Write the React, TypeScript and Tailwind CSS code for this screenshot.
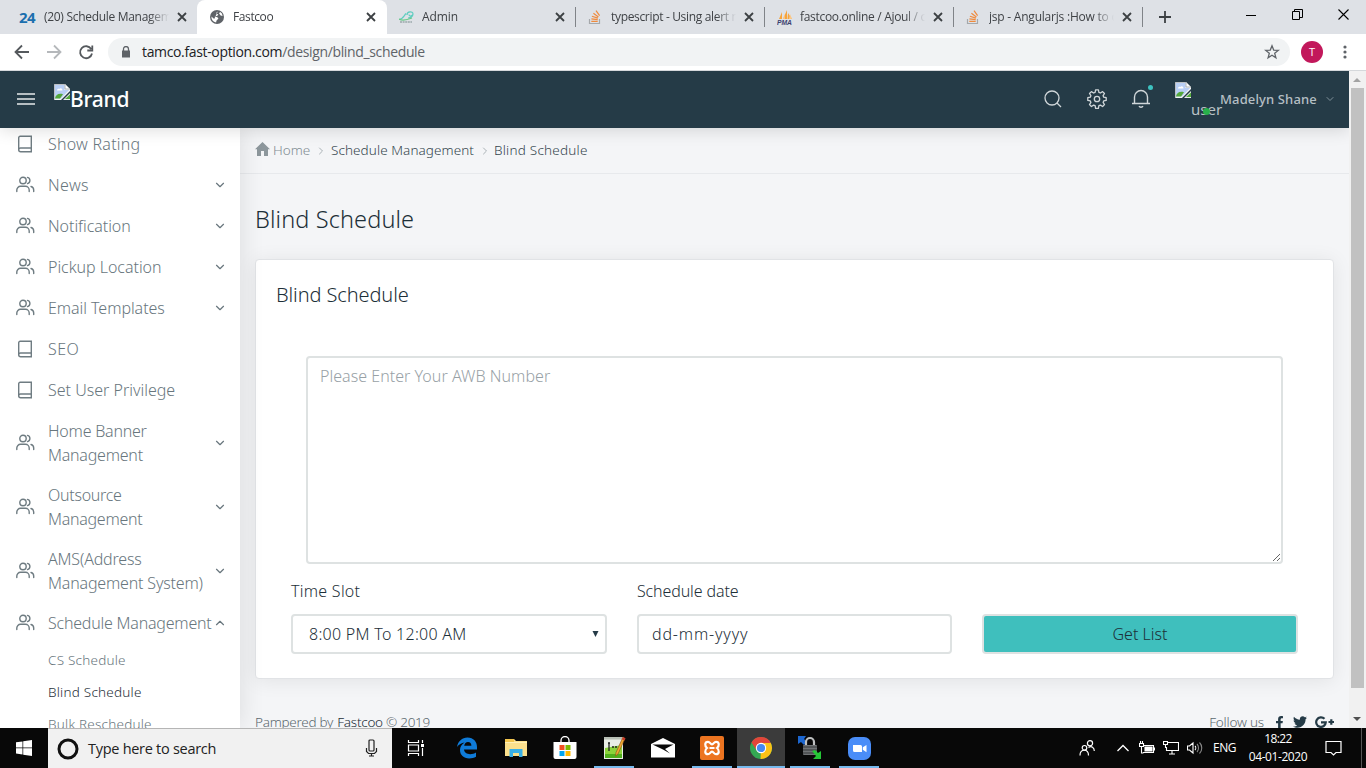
import React from "react";
import { FaFacebookF, FaTwitter } from "react-icons/fa";
import { ChevronDown, ChevronUp, ChevronRight } from "lucide-react";

type TabProps = { icon: React.ReactNode; title: string; track: string; width: string; pad: string; active?: boolean; sep?: boolean };

const CloseX = () => (
  <svg width="10" height="10" viewBox="0 0 10 10" stroke="#3c4043" strokeWidth="1.8" className="shrink-0">
    <path d="M1 1l8 8M9 1l-8 8" />
  </svg>
);

const Tab = ({ icon, title, track, width, pad, active, sep }: TabProps) => (
  <div className={`relative flex h-[34px] shrink-0 items-center ${width} ${pad} ${active ? "rounded-t-lg bg-white" : ""}`}>
    <span className="flex w-[23px] shrink-0 items-center">{icon}</span>
    <span className={`mr-[8px] w-[125px] overflow-hidden whitespace-nowrap text-[12px] leading-[18px] text-[#3f4246] [mask-image:linear-gradient(to_right,black_84%,transparent)] ${track}`}>
      {title}
    </span>
    <CloseX />
    {sep && <span className="absolute right-0 top-[7px] h-5 w-px bg-[#808388]" />}
  </div>
);

const StackIcon = () => (
  <svg width="14" height="16" viewBox="0 0 14 16" fill="none">
    <path d="M1.5 10v4.5h10V10" stroke="#a5a8ab" strokeWidth="1.2" />
    <path d="M3.3 12.3h6.4M3.4 9.8l6.3.8M3.9 7.2l6 1.9M5.4 4.3l5 3.6M8 1.6l3.6 5" stroke="#f08a3c" strokeWidth="1.2" />
  </svg>
);

const GlobeIcon = () => (
  <svg width="14" height="14" viewBox="0 0 14 14">
    <circle cx="7" cy="7" r="7" fill="#5f6368" />
    <path d="M7.8 1.4c-1.8 1-2 2.3-.4 2.7 1.6.3.5 1.6-.7 2-.9.4-1.800.3-2.600.3C5.500 7 8 6.800 8.300 8.300c.2 1.200-1.700 1.500-1.900 2.700l-.3 1.600C3 12 1.300 9.700 1.400 6.600l2.800 2.300M9 3.300l1.600 2.200 2 .6-.7-2.500-1.700-1.500z" fill="#fff" />
  </svg>
);

const BrokenImage = () => (
  <svg width="16" height="16" viewBox="0 0 16 16" className="shrink-0">
    <path d="M0 0h11l5 5v2L7 16H0z" fill="#f3f5f6" />
    <path d="M1 1h9.500v5H15L7 14.500H1z" fill="#b9cff5" />
    <path d="M3 6.500c0-1.500 1.500-2 2.300-1.400C6 3.500 8.500 4 8.500 6.500z" fill="#fff" />
    <path d="M1 14.500c.5-4 4-5.500 8-4.300L6 14.500z" fill="#54a83b" />
    <path d="M11 0v5h5z" fill="#fff" stroke="#9da3a6" strokeWidth=".8" />
    <path d="M0 .4h11M.4 0v16" stroke="#a6acaf" strokeWidth=".8" />
    <path d="M16 9v7H9z" fill="#e8ebec" />
    <path d="M16 10.500V15h-5z" fill="#54a83b" />
  </svg>
);

const BookIcon = () => (
  <svg width="18" height="18" viewBox="0 0 18 18" fill="none" stroke="#6f7c82" strokeWidth="1.4" className="ml-px">
    <path d="M4.200 1.200h11.100v15.600H4.700a2 2 0 0 1-2-2V2.700a1.500 1.500 0 0 1 1.500-1.500zM2.800 14.200a1.800 1.800 0 0 1 1.800-1.200h10.700" />
  </svg>
);

const UsersIcon = () => (
  <svg width="20" height="18" viewBox="0 0 20 18" fill="none" stroke="#6f7c82" strokeWidth="1.4" strokeLinecap="round">
    <circle cx="8" cy="4.500" r="3.200" />
    <path d="M1.800 15.500V14a3.700 3.700 0 0 1 3.700-3.700h5a3.700 3.700 0 0 1 3.700 3.700v1.500M12.500 1.400a3.200 3.200 0 0 1 0 6.200M16 10.500a3.600 3.600 0 0 1 2.700 3.500v1.500" />
  </svg>
);

type Item = { label: string; icon: "book" | "users"; track: string; arrow?: "down" | "up"; tall?: boolean };
const items: Item[] = [
  { label: "Show Rating", icon: "book", track: "tracking-[0.24px]" },
  { label: "News", icon: "users", arrow: "down", track: "tracking-[0.35px]" },
  { label: "Notification", icon: "users", arrow: "down", track: "tracking-[-0.05px]" },
  { label: "Pickup Location", icon: "users", arrow: "down", track: "tracking-[-0.03px]" },
  { label: "Email Templates", icon: "users", arrow: "down", track: "tracking-[-0.05px]" },
  { label: "SEO", icon: "book", track: "tracking-[0.4px]" },
  { label: "Set User Privilege", icon: "book", track: "tracking-[0px]" },
  { label: "Home Banner Management", icon: "users", arrow: "down", tall: true, track: "tracking-[-0.23px]" },
  { label: "Outsource Management", icon: "users", arrow: "down", tall: true, track: "tracking-[-0.28px]" },
  { label: "AMS(Address Management System)", icon: "users", arrow: "down", tall: true, track: "tracking-[-0.18px]" },
  { label: "Schedule Management", icon: "users", arrow: "up", track: "tracking-[-0.22px]" },
];

const BrowserChrome = () => (
  <>
    <div className="flex h-[34px] shrink-0 items-center bg-[#dee1e6] font-['Open_Sans',sans-serif]">
      <Tab width="w-[197px]" pad="pl-[19px]" title="(20) Schedule Management" track="tracking-[-0.3px] ml-[2px]" icon={<b className="text-[15px] leading-none tracking-[-0.5px] text-[#1b6fae]">24</b>} />
      <Tab width="w-[190px]" pad="pl-[13px]" active title="Fastcoo" track="tracking-[-0.4px]" icon={<GlobeIcon />} />
      <Tab
        width="w-[189px]" pad="pl-[12px]" sep title="Admin" track="tracking-[-0.1px]"
        icon={
          <svg width="16" height="14" viewBox="0 0 16 14" fill="none">
            <path d="M0 9.500c4 0 5-4 7-6M8 5c0-4 6-4 6-1 0 2-4 3-4 .5M14 4c0 3-3 4-5 4" stroke="#5fcdc0" strokeWidth="1.200" />
            <path d="M0 9c3 2 8 1 13-1" stroke="#6cc98a" strokeWidth="1.200" /><path d="M1 12h12" stroke="#9aa8ab" strokeDasharray="2 .6" strokeWidth="1.400" />
          </svg>
        }
      />
      <Tab width="w-[189px]" pad="pl-[12px]" sep title="typescript - Using alert message" track="tracking-[-0.33px]" icon={<StackIcon />} />
      <Tab
        width="w-[189px]" pad="pl-[12px]" sep title="fastcoo.online / Ajoul / customer" track="tracking-[-0.31px]"
        icon={
          <svg width="17" height="15" viewBox="0 0 17 15">
            <path d="M2 9L5 2v7zM6 9l4-9v9zM10.500 9L11 3l4 6z" fill="#f6a43c" /><path d="M6 9L7.500 4 8 9zM12 9l1-5 2 5z" fill="#fbc98a" />
            <text x="0" y="14.500" fontSize="6.500" fontWeight="800" fontStyle="italic" fill="#3c4170" fontFamily="Liberation Sans" textLength="15" lengthAdjust="spacingAndGlyphs">PMA</text>
          </svg>
        }
      />
      <Tab width="w-[189px]" pad="pl-[12px]" sep title="jsp - Angularjs :How to call" track="tracking-[-0.22px]" icon={<StackIcon />} />
      <svg width="12" height="12" viewBox="0 0 12 12" className="ml-4" stroke="#3c4043" strokeWidth="1.800"><path d="M6 0v12M0 6h12" /></svg>
      <div className="mb-[6px] ml-auto mr-[17px] flex items-center gap-[35px]">
        <svg width="11" height="11" stroke="#000"><path d="M0 6.500h10" /></svg>
        <svg width="11" height="11" fill="none" stroke="#000"><path d="M.5 2.500h7v8h-7zM2.500 2.500v-2h8v8h-3" /></svg>
        <svg width="11" height="11" stroke="#000" strokeWidth="1.100"><path d="M.5.5l10 10M10.500.5l-10 10" /></svg>
      </div>
    </div>
    <div className="flex h-[37px] shrink-0 items-center border-b border-[#d5d8db] bg-white pl-[14px] font-['Open_Sans',sans-serif]">
      <svg width="80" height="16" viewBox="0 0 80 16" fill="none" strokeWidth="1.800">
        <path d="M15 8H2M8 1.500L1.500 8 8 14.500" stroke="#55595d" />
        <path d="M33 8h13M40 1.500L46.500 8 40 14.500" stroke="#b5b8bb" />
        <path d="M77.200 5A6 6 0 1 0 78 9.500M78.300 1.500v5h-5" stroke="#55595d" />
      </svg>
      <div className="ml-[14px] flex h-7 w-[1182px] items-center rounded-full bg-[#f1f3f4] pl-[13px]">
        <svg width="10" height="12" viewBox="0 0 10 12"><path d="M1 4.500h8v7H1z" fill="#5f6368" /><path d="M2.500 5V3a2.500 2.500 0 0 1 5 0v2" fill="none" stroke="#5f6368" strokeWidth="1.300" /></svg>
        <span className="ml-[11px] text-[14px] leading-5 tracking-[-0.35px] text-[#5f6368]"><span className="text-[#202124]">tamco.fast-option.com</span>/design/blind_schedule</span>
        <svg width="16" height="16" viewBox="0 0 16 16" className="ml-auto mr-[10px]" fill="none" stroke="#5f6368" strokeWidth="1.300"><path d="M8 1.800l1.700 4.300 4.600.3-3.600 2.900 1.200 4.500L8 11.300l-3.900 2.500 1.200-4.500L1.700 6.400l4.600-.3z" /></svg>
      </div>
      <div className="ml-[11px] flex size-[22px] items-center justify-center rounded-full bg-[#c2185b] text-[11px] text-white">T</div>
      <svg width="4" height="14" className="ml-[20px]" fill="#5f6368"><circle cx="2" cy="2" r="1.600" /><circle cx="2" cy="7" r="1.600" /><circle cx="2" cy="12" r="1.600" /></svg>
    </div>
  </>
);

const Header = () => (
  <header className="relative z-20 flex h-[57px] shrink-0 items-center bg-[#253b47] pb-[2px] shadow-[0_2px_16px_rgba(0,0,0,0.14)]">
    <svg width="18" height="12" viewBox="0 0 18 12" className="ml-[17px] shrink-0" stroke="#e6eaec" strokeWidth="1.600"><path d="M0 1h18M0 6h18M0 11h18" /></svg>
    <div className="ml-[19px] flex items-start">
      <BrokenImage />
      <span className="font-['Noto_Sans',sans-serif] text-[21px] font-medium leading-[30px] tracking-[-0.2px] text-white">Brand</span>
    </div>
    <div className="ml-auto flex items-center text-[#d0d6d9]">
      <svg width="18" height="18" viewBox="0 0 18 18" fill="none" stroke="currentColor" strokeWidth="1.300"><circle cx="8" cy="8" r="7" /><path d="M13 13l4 4" /></svg>
      <svg width="20" height="20" viewBox="0 0 20 20" fill="none" stroke="currentColor" strokeWidth="1.300" strokeLinejoin="round" className="ml-[25px]">
        <circle cx="10" cy="10" r="2.700" />
        <path d="M8.600.8h2.800l.5 2.500 1.500.7 2.200-1.400 1.900 1.900L16.100 6.700l.6 1.500 2.500.5v2.700l-2.500.5-.6 1.500 1.400 2.200-1.900 1.900-2.200-1.400-1.500.6-.5 2.600H8.600l-.5-2.600-1.500-.6-2.200 1.400-1.900-1.900 1.400-2.200-.6-1.500-2.500-.5V8.700l2.500-.5.6-1.500-1.400-2.200 1.900-1.900L6.600 4l1.500-.7z" />
      </svg>
      <div className="relative ml-[25px]">
        <svg width="18" height="19" viewBox="0 0 18 19" fill="none" stroke="currentColor" strokeWidth="1.400"><path d="M0 14.500h18M2.500 14.500V8a6.500 6.500 0 0 1 13 0v6.500M7 17.200c.8 1.300 3.200 1.300 4 0" /></svg>
        <span className="absolute -right-[3px] -top-[4px] size-[5px] rounded-full bg-[#3dc2c0]" />
      </div>
      <div className="relative ml-[25px] h-[34px] w-[45px]">
        <BrokenImage />
        <span className="absolute left-4 top-[17px] font-['Noto_Sans',sans-serif] text-[15px] leading-[20px] text-[#bac2c6]">user</span>
        <span className="absolute left-[28px] top-[26px] size-[7px] rounded-full bg-[#28b04b]" />
      </div>
      <span className="w-[97px] whitespace-nowrap font-['Noto_Sans',sans-serif] text-[13px] font-medium leading-5 tracking-[0.13px] text-[#b5bfc4]">Madelyn Shane</span>
      <ChevronDown size={12} strokeWidth={2} className="ml-[7px] mr-[13px] text-[#80919a]" />
    </div>
  </header>
);

const Sidebar = () => (
  <aside className="relative z-10 h-full w-60 shrink-0 overflow-visible bg-white shadow-[0_0_24px_rgba(0,0,0,0.11)]">
    <nav className="-mt-1 font-light text-[#68767d]">
      {items.map((it) => (
        <div key={it.label} className={`flex items-center pl-[15px] ${it.tall ? "h-16" : "h-[41px] pb-px"}`}>
          <span className="flex w-[33px] shrink-0 justify-start">{it.icon === "book" ? <BookIcon /> : <UsersIcon />}</span>
          <span className={`w-[165px] text-[16px] leading-6 ${it.tall ? "pr-[3px]" : "whitespace-nowrap"} ${it.track}`}>{it.label}</span>
          {it.arrow === "down" && <ChevronDown size={14} strokeWidth={2} />}
          {it.arrow === "up" && <ChevronUp size={14} strokeWidth={2} />}
        </div>
      ))}
      <div className="flex flex-col pl-12 text-[13.5px] leading-8 tracking-[0.22px]">
        <span>CS Schedule</span>
        <span className="text-[#1f3038]">Blind Schedule</span>
        <span>Bulk Reschedule</span>
      </div>
    </nav>
  </aside>
);

const Content = () => (
  <main className="flex min-w-0 flex-1 flex-col bg-[#f4f5f7] font-light text-[#1d2f38]">
    <div className="flex h-[46px] shrink-0 items-center border-b border-[#e7e9ec] pl-[15px] text-[13.5px] text-[#35464e]">
      <svg width="15" height="14" viewBox="0 0 15 14" fill="#8d979c" className="mb-[3px]"><path d="M7.500 0l7.500 7.300h-2V14H9V9H6v5H2V7.300H0z" /></svg>
      <span className="ml-[3px] w-[38px] text-[#828d93]">Home</span>
      <ChevronRight size={12} className="mx-[4px] text-[#aab2b6]" />
      <span className="w-[144px] whitespace-nowrap tracking-[0.08px]">Schedule Management</span>
      <ChevronRight size={12} className="mx-[4px] text-[#aab2b6]" />
      <span className="-ml-px tracking-[0.22px]">Blind Schedule</span>
    </div>
    <h1 className="mt-[27px] pl-[15px] text-[23.5px] leading-9 tracking-[0.12px]">Blind Schedule</h1>
    <section className="ml-[15px] mt-[22px] flex h-[420px] w-[1079px] shrink-0 flex-col rounded border border-[#e1e3e6] bg-white shadow-[0_2px_20px_rgba(0,0,0,0.08)]">
      <h2 className="ml-5 mt-[19px] text-[20px] leading-8 tracking-[-0.1px]">Blind Schedule</h2>
      <textarea placeholder="Please Enter Your AWB Number" className="ml-[50px] mt-[45px] h-[208px] w-[977px] shrink-0 resize rounded border-2 border-[#dee2e2] px-3 py-[6px] text-[16px] leading-6 tracking-[0.03px] outline-none placeholder:text-[#98a1a6]" />
      <div className="ml-[35px] mt-[15px] flex gap-[30px] text-[16px] leading-6">
        <div className="w-[316px]">
          <label className="block tracking-[0.27px]">Time Slot</label>
          <div className="mt-[11px] flex h-10 items-center justify-between rounded border-2 border-[#dee2e2] pl-4 pr-[6px]">
            <span className="tracking-[0.28px]">8:00 PM To 12:00 AM</span>
            <svg width="7" height="7" viewBox="0 0 7 7"><path d="M.500 0h6L3.500 6z" fill="#253b47" /></svg>
          </div>
        </div>
        <div className="w-[315px]">
          <label className="block tracking-[-0.12px]">Schedule date</label>
          <div className="mt-[11px] flex h-10 items-center rounded border-2 border-[#dee2e2] pl-[13px] tracking-[0.82px]">dd-mm-yyyy</div>
        </div>
        <button className="mt-[35px] h-10 w-[316px] rounded border-2 border-[#dee2e2] bg-[#3fbfbd]">Get List</button>
      </div>
    </section>
    <footer className="mt-[33px] flex h-5 items-center justify-between pl-[15px] pr-[15px] text-[13.5px] leading-5 tracking-[-0.27px] text-[#5c696f]">
      <span>Pampered by <span className="ml-px text-[#1d2f38]">Fastcoo</span> © 2019</span>
      <span className="flex items-center">
        <span className="mr-[9px] tracking-[-0.2px]">Follow us</span>
        <FaFacebookF size={13} className="mr-[7px] text-[#253b47]" />
        <FaTwitter size={14} className="mr-[8px] text-[#253b47]" />
        <svg width="19" height="12" viewBox="0 0 19 12" fill="none" stroke="#253b47" strokeWidth="2.200"><path d="M9.500 2.800A4.800 4.800 0 1 0 10.800 6.300H6M13.500 6h5.500M16.300 3.200v5.500" /></svg>
      </span>
    </footer>
  </main>
);

const TaskButton = ({ children, state }: { children: React.ReactNode; state?: "open" | "active" }) => (
  <div className={`relative flex h-10 w-12 items-center justify-center ${state === "active" ? "bg-[#3b3b3b]" : ""}`}>
    {children}
    {state && <span className={`absolute bottom-0 h-[2px] bg-[#76b9ed] ${state === "active" ? "w-12" : "w-10"}`} />}
  </div>
);

const Taskbar = () => (
  <div className="relative z-30 flex h-10 shrink-0 items-center bg-[#080808] font-['Open_Sans',sans-serif] text-white">
    <div className="flex w-12 justify-center">
      <svg width="16" height="16" viewBox="0 0 16 16" fill="#fff"><path d="M0 2.300l6.500-.9v6.100H0zM7.200 1.300L16 0v7.500H7.200zM0 8.300h6.500v6.200L0 13.600zM7.200 8.300H16V16l-8.800-1.300z" /></svg>
    </div>
    <div className="flex h-10 w-[344px] items-center border-t border-[#b5b5b5] bg-[#f1f1f1] pl-[9px] pr-[14px]">
      <svg width="22" height="22" viewBox="0 0 22 22"><circle cx="11" cy="11" r="9" fill="none" stroke="#111" strokeWidth="3" /></svg>
      <span className="ml-[9px] text-[14.5px] leading-5 tracking-[-0.28px] text-[#222]">Type here to search</span>
      <svg width="13" height="18" viewBox="0 0 13 18" fill="none" stroke="#222" strokeWidth="1.200" className="mb-[2px] ml-auto"><rect x="4" y="1" width="5" height="11" rx="1" /><path d="M1.500 9v3.500l2 2h6l2-2V9M6.500 14.500V17M4 17h5" /></svg>
    </div>
    <div className="mr-[3px] flex w-12 justify-center">
      <svg width="18" height="16" viewBox="0 0 18 16" fill="none" stroke="#fff" strokeWidth="1.200"><path d="M1.500 0v2.500h10V0M1.500 16v-2.500h10V16M1.500 5h10v6h-10zM15.500 0v3M15.500 8v8" /><path d="M14 4h3v3h-3z" fill="#fff" stroke="none" /></svg>
    </div>
    <div className="flex gap-px">
      <TaskButton><svg width="22" height="22" viewBox="0 0 22 22" fill="#0f7bd8"><path d="M1 10C2 4.500 6 .6 11.500.6 17.500.6 21 5 21 10v2.600H8c.2 3 3 4.600 6.200 4.600 2.200 0 4.200-.6 5.800-1.600v4.200c-1.800 1-4.200 1.600-6.800 1.600C7.600 21.400 4 18 4 13c0-3.300 1.700-6 4.600-7.600C5.500 5.800 2.800 7.200 1 10zm7.200-1.200h7.200c0-2.300-1.200-3.700-3.400-3.700-2.100 0-3.400 1.500-3.800 3.700z" /></svg></TaskButton>
      <TaskButton><svg width="22" height="20" viewBox="0 0 22 20"><path d="M0 1h9l2 2h11v15H0z" fill="#fbe08c" /><path d="M0 1h9v3H0z" fill="#f4c64e" /><path d="M0 4h22v1H0z" fill="#fff0b8" /><path d="M4.500 11h13v8H14v-4H8v4H4.500z" fill="#3ab0e6" /></svg></TaskButton>
      <TaskButton><svg width="24" height="24" viewBox="0 0 24 24"><path d="M8 6V4.500a4 4 0 0 1 8 0V6" fill="none" stroke="#fff" strokeWidth="1.300" /><path d="M.500 6h23v15q0 2-2 2h-19q-2 0-2-2z" fill="#fff" /><path d="M6.500 9h5v5h-5z" fill="#f25022" /><path d="M12.500 9h5v5h-5z" fill="#7fba00" /><path d="M6.500 15h5v5h-5z" fill="#00a4ef" /><path d="M12.500 15h5v5h-5z" fill="#ffb900" /></svg></TaskButton>
      <TaskButton state="open"><svg width="24" height="24" viewBox="0 0 24 24" className="mb-px"><path d="M2 1h19v22H2z" fill="#e9eee5" /><path d="M2 1h19v2.500H2z" fill="#b8bfb5" /><path d="M3 12l17-3v13H3z" fill="#8ad33a" /><path d="M3 18h17v4H3z" fill="#4fae1c" /><path d="M7 7v8M6 7h2M10 11h2M13 11h2" stroke="#222" strokeWidth="1.300" /><path d="M21 1l2 1.500L16 18l-2.500 2 .5-3.500z" fill="#eda72f" stroke="#8a4c1b" strokeWidth=".6" /><path d="M21 1l2.500 1.500-1 2-2.500-1z" fill="#ca3b2e" /></svg></TaskButton>
      <TaskButton><svg width="24" height="20" viewBox="0 0 24 20"><path d="M0 6l12-6 12 6v13.500H0z" fill="#fff" /><path d="M1.500 6.500h21L14 11l5 4.500-7-4z" fill="#080808" /></svg></TaskButton>
      <TaskButton state="open"><svg width="24" height="24" viewBox="0 0 24 24"><rect width="24" height="24" rx="2" fill="#ec7420" /><path d="M8 5.800C4.500 5.800 4.500 10 7 12c-2.500 2-2.500 6.200 1 6.200 2.200 0 2.200-2.500 4-2.500s1.800 2.500 4 2.500c3.500 0 3.500-4.200 1-6.200 2.500-2 2.500-6.200-1-6.200-2.200 0-2.200 2.500-4 2.500S10.200 5.800 8 5.800zM9.500 12h5" fill="none" stroke="#fff" strokeWidth="2.200" /></svg></TaskButton>
      <TaskButton state="active">
        <svg width="22" height="22" viewBox="0 0 22 22"><circle cx="11" cy="11" r="11" fill="#34a853" /><path d="M11 11V6h9.800A11 11 0 0 1 10.500 22z" fill="#fbc116" /><path d="M1.500 5.500A11 11 0 0 1 20.800 6H11L6.700 13.500z" fill="#e2453a" /><circle cx="11" cy="11" r="5.200" fill="#fff" /><circle cx="11" cy="11" r="4.100" fill="#4688f1" /></svg>
      </TaskButton>
      <TaskButton state="open"><svg width="24" height="24" viewBox="0 0 24 24"><path d="M0 0h8L6 3l3 3-3 3-3-3-3 2z" fill="#1c66cf" /><path d="M8 11V6a4 4 0 0 1 8 0v5" fill="none" stroke="#bfc1c2" strokeWidth="2.200" /><rect x="5" y="9" width="14" height="10" rx="1" fill="#707375" /><path d="M5 11h14M5 14h14M5 17h14" stroke="#35383a" /><path d="M14 15l3-1 3 3 3-2v8h-8l3-3z" fill="#25c636" /></svg></TaskButton>
      <TaskButton state="open"><svg width="23" height="23" viewBox="0 0 23 23"><rect width="23" height="23" rx="7" fill="#4a8df8" /><path d="M5 8h7.500q1.500 0 1.500 1.500V15H6.500Q5 15 5 13.500zM14.800 10.300L18.500 8v7.200l-3.700-2.400z" fill="#fff" /></svg></TaskButton>
    </div>
    <div className="ml-auto flex items-center">
      <svg width="16" height="16" viewBox="0 0 16 16" fill="none" stroke="#fff" strokeWidth="1.200"><circle cx="11" cy="3.300" r="2.600" /><circle cx="5.500" cy="7.800" r="2.300" /><path d="M1 15.500c0-7 8.500-7 8.500 0M9.500 7.500c3-2 5.800 0 5.800 3.500" /></svg>
      <svg width="12" height="8" viewBox="0 0 12 8" fill="none" stroke="#fff" strokeWidth="1.300" className="ml-[22px]"><path d="M.5 7L6 1.500 11.500 7" /></svg>
      <svg width="16" height="14" viewBox="0 0 16 14" fill="none" stroke="#fff" strokeWidth="1.100" className="ml-[10px]"><path d="M5 4.500h9.500v7H4M.500 2.500h4v3h-4zM1.500 0v2M3.500 0v2M2.500 5.500V12h2M15.500 6.500v3" /><path d="M6 6h7v4H6z" fill="#fff" /></svg>
      <svg width="16" height="14" viewBox="0 0 16 14" fill="none" stroke="#fff" strokeWidth="1.100" className="ml-[8px]"><path d="M5 1.500h10.500v8h-12V6M9 10v3M6 13h6M.500.500h4v3h-4zM2.500 4v3" /></svg>
      <svg width="16" height="14" viewBox="0 0 16 14" fill="none" stroke="#fff" strokeWidth="1.100" className="ml-[8px]"><path d="M.500 5v4h2l3.500 3V2L2.500 5zM8 5c1 1 1 3 0 4" /><path d="M10 3c2 2 2 6 0 8M12.500 1.500c3 3 3 8 0 11" stroke="#888" /></svg>
      <span className="ml-[10px] w-[24px] text-[12px] tracking-[-0.5px]">ENG</span>
      <div className="ml-[11px] flex w-[60px] flex-col items-center whitespace-nowrap text-[12px] leading-[18px] tracking-[-0.6px]">
        <span>18:22</span>
        <span className="tracking-[-0.43px]">04-01-2020</span>
      </div>
      <svg width="17" height="17" viewBox="0 0 17 17" fill="none" stroke="#fff" strokeWidth="1.200" className="ml-[17px]"><path d="M1 1.500h15v11h-5L8.500 15 6 12.500H1z" /></svg>
      <span className="ml-[19px] mr-1 h-10 w-px bg-[#555]" />
    </div>
  </div>
);

export default function App() {
  return (
    <div className="flex h-[768px] w-[1366px] flex-col overflow-hidden font-['Noto_Sans',sans-serif]">
      <BrowserChrome />
      <div className="flex min-h-0 flex-1">
        <div className="flex w-[1349px] shrink-0 flex-col overflow-hidden">
          <Header />
          <div className="flex h-[600px] overflow-hidden">
            <Sidebar />
            <Content />
          </div>
        </div>
        <div className="flex w-[17px] flex-col items-center bg-[#f1f1f1]">
          <svg width="9" height="17" viewBox="0 0 9 17"><path d="M0 11h8L4 7z" fill="#a3a3a3" /></svg>
          <div className="h-[600px] w-[13px] bg-[#c1c1c1]" />
          <svg width="9" height="17" viewBox="0 0 9 17" className="mt-auto"><path d="M0 6h8L4 10z" fill="#505050" /></svg>
        </div>
      </div>
      <Taskbar />
    </div>
  );
}
